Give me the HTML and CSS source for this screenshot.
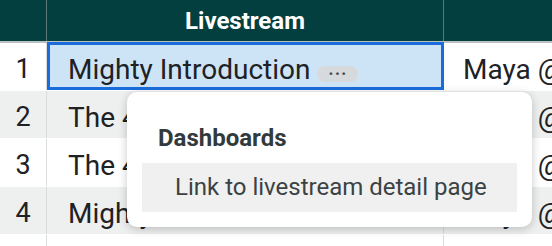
FILE: index.html
```html
<!DOCTYPE html>
<html lang="en">
<head>
<meta charset="UTF-8">
<title>Livestreams</title>
<link rel="stylesheet" href="styles.css">
</head>
<body>
<div class="sheet">
    <table class="grid">
        <thead>
            <tr>
                <th class="num"></th>
                <th class="title">Livestream</th>
                <th class="host"></th>
            </tr>
        </thead>
        <tbody>
            <tr>
                <td class="num">1</td>
                <td class="title selected">Mighty Introduction <span class="more">&middot;&middot;&middot;</span></td>
                <td class="host">Maya @</td>
            </tr>
            <tr>
                <td class="num">2</td>
                <td class="title">The 4 Pillars of Community</td>
                <td class="host">Maya @</td>
            </tr>
            <tr>
                <td class="num">3</td>
                <td class="title">The 4 Stages of Growth</td>
                <td class="host">Maya @</td>
            </tr>
            <tr>
                <td class="num">4</td>
                <td class="title">Mighty Office Hours</td>
                <td class="host">Maya @</td>
            </tr>
            <tr>
                <td class="num"></td>
                <td class="title"></td>
                <td class="host"></td>
            </tr>
        </tbody>
    </table>

    <div class="menu">
        <div class="menu-heading">Dashboards</div>
        <div class="menu-item">Link to livestream detail page</div>
    </div>
</div>
</body>
</html>
```

FILE: styles.css
```css
body {
    margin: 0;
    font-family: Roboto, "Liberation Sans", sans-serif;
    background: #ffffff;
    overflow: hidden;
}

.sheet {
    position: relative;
    width: 552px;
    height: 246px;
    overflow: hidden;
}

.grid {
    border-collapse: collapse;
    table-layout: fixed;
    width: 700px;
}

.grid th {
    height: 41px;
    padding: 0;
    background: #033f3e;
    color: #ffffff;
    font-size: 24px;
    font-weight: bold;
    text-align: center;
    border-left: 1px solid #5a7877;
    border-bottom: 2px solid #b9c1c1;
}

.grid th:first-child {
    border-left: none;
}

.grid tbody tr {
    height: 48px;
}

.grid td {
    padding: 6px 0 0 0;
    font-size: 28px;
    color: #202124;
    white-space: nowrap;
    overflow: hidden;
    border-left: 1px solid #d8dcdc;
    border-bottom: 1px solid #ffffff;
}

.grid td:first-child {
    border-left: none;
}

.grid tbody tr:nth-child(even) td {
    background: #eeefef;
}

.num {
    width: 46px;
}

.grid td.num {
    text-align: center;
    font-size: 27px;
}

.title {
    width: 396px;
}

.grid td.title {
    padding-left: 21px;
}

.grid td.host {
    padding-left: 19px;
}

.grid td.selected {
    background: #cde4f7;
    outline: 3px solid #1a6cdc;
    outline-offset: -3px;
}

.more {
    display: inline-block;
    vertical-align: -1px;
    width: 41px;
    height: 16px;
    border-radius: 8px;
    background: #d7dadc;
    color: #4b4d50;
    font-size: 18px;
    font-weight: bold;
    line-height: 16px;
    text-align: center;
    letter-spacing: 1px;
}

.menu {
    position: absolute;
    left: 127px;
    top: 92px;
    width: 405px;
    height: 135px;
    box-sizing: border-box;
    padding: 32px 15px 15px 15px;
    background: #ffffff;
    border-radius: 10px;
    box-shadow: 0 2px 10px rgba(0, 0, 0, 0.22);
}

.menu-heading {
    padding-left: 16px;
    font-size: 24px;
    font-weight: bold;
    color: #333a3b;
    line-height: 28px;
    margin-bottom: 11px;
}

.menu-item {
    height: 49px;
    line-height: 49px;
    padding-left: 33px;
    background: #f0f0f0;
    font-size: 24px;
    color: #3b4244;
}
```
